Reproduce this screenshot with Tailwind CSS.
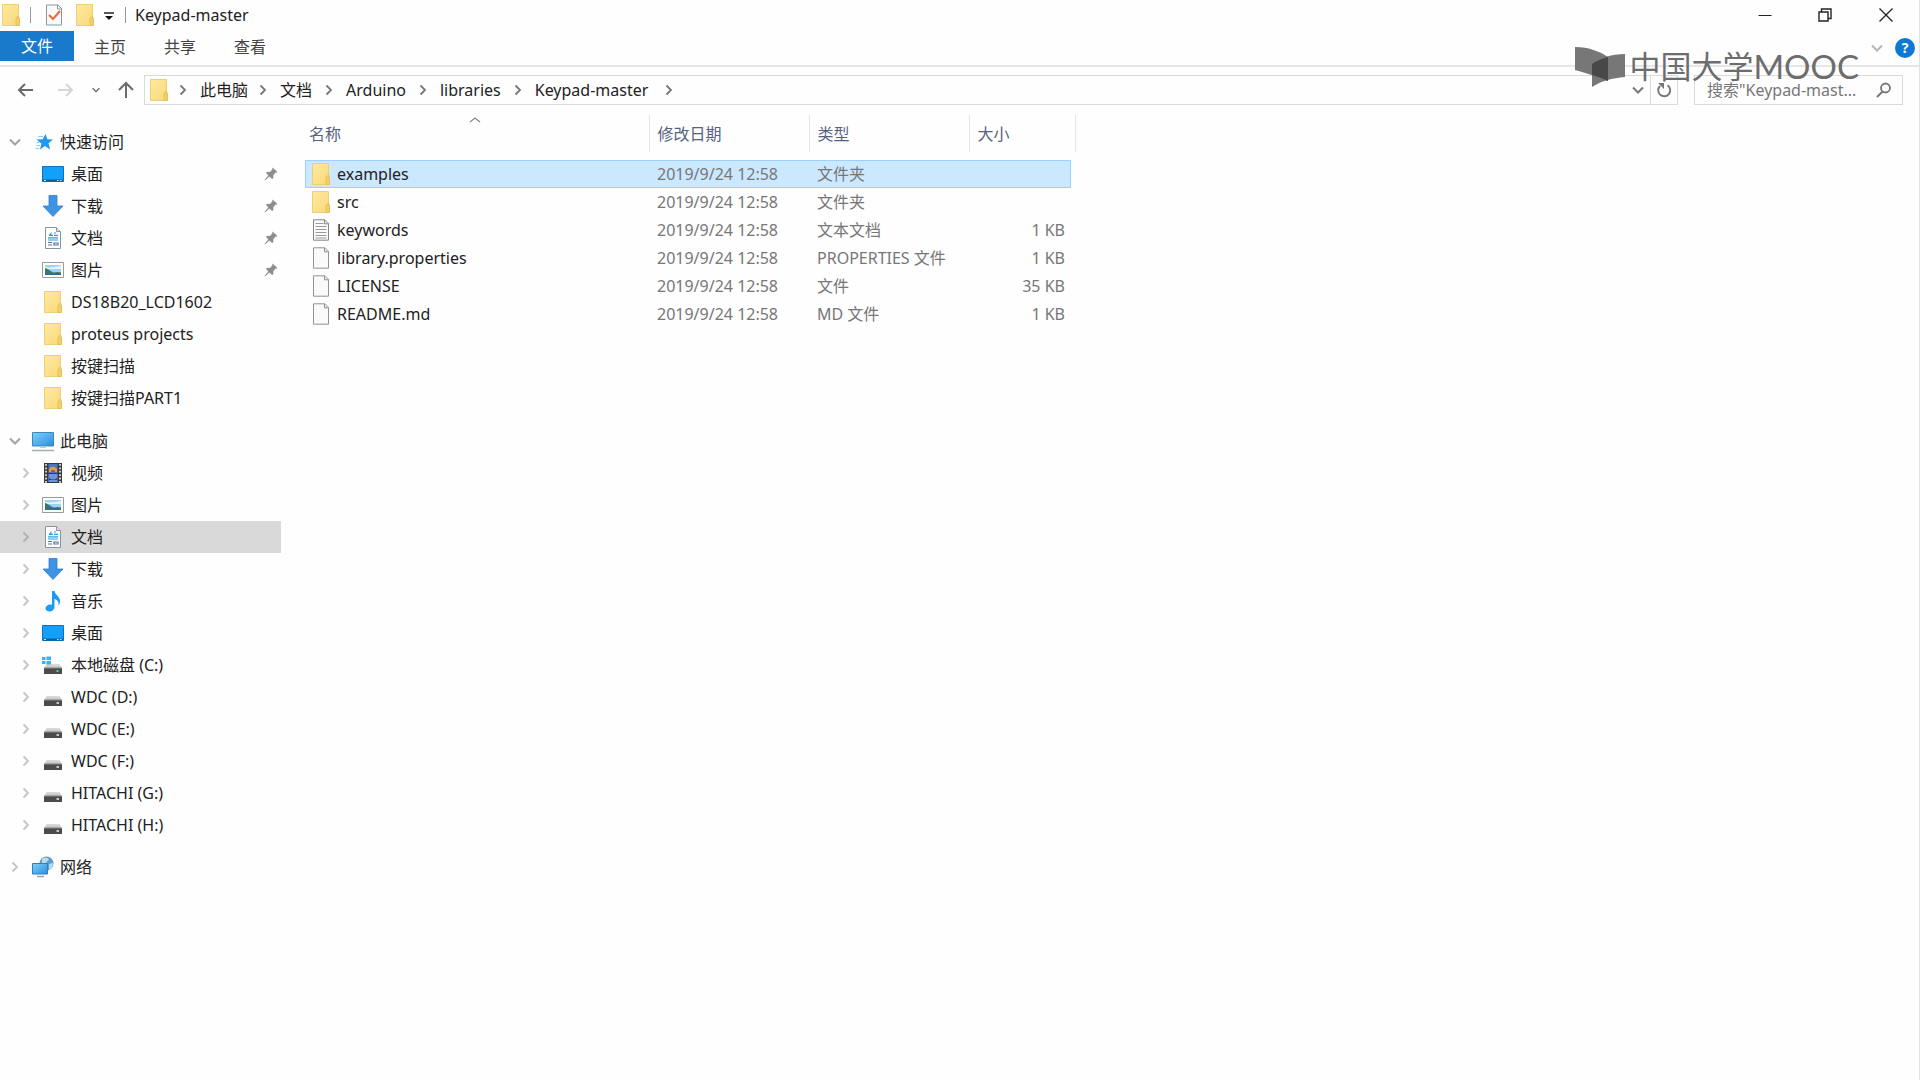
<!DOCTYPE html>
<html lang="zh-CN">
<head>
<meta charset="utf-8">
<title>Keypad-master</title>
<script src="https://cdn.jsdelivr.net/npm/@tailwindcss/browser@4"></script>
</head>
<body class="flex min-h-screen flex-col border-r border-[#e3e3e3] bg-[#fefefe] font-['Noto_Sans','Noto_Sans_CJK_SC',sans-serif] text-[16px] leading-6 text-[#222]">
<svg class="absolute h-0 w-0" aria-hidden="true">
  <defs>
    <linearGradient id="gBlue" x1="0" y1="0" x2="1" y2="1"><stop offset="0" stop-color="#7cd0fa"/><stop offset="1" stop-color="#2c8fdc"/></linearGradient>
    <linearGradient id="gFolder" x1="0" y1="0" x2="1" y2="1"><stop offset="0" stop-color="#ffe9a2"/><stop offset="1" stop-color="#f8d978"/></linearGradient>
    <linearGradient id="gDrive" x1="0" y1="0" x2="0" y2="1"><stop offset="0" stop-color="#dedede"/><stop offset="1" stop-color="#bdbdbd"/></linearGradient>
  </defs>
  <symbol id="folder" viewBox="0 0 20 22"><path d="M1.500 .5h16V13l1 1v7.500h-17z" fill="url(#gFolder)" stroke="#efcf74"/><path d="M15 21.500V14l2.500-2v2l1 1v6.500z" fill="#f3cf66" stroke="#e2b94f" stroke-width=".7"/></symbol>
  <symbol id="desktop" viewBox="0 0 22 22"><path d="M.5 3.500h21v15H.5z" fill="#12a0fb" stroke="#1271b8"/><path d="M1 17.500h20" stroke="#0b5f9f" stroke-width="2"/><path d="M2 17.500h2M15 17.500h1.500M18 17.500h1.500" stroke="#d8efff"/></symbol>
  <symbol id="download" viewBox="0 0 22 22"><path d="M7 .5h8V11h6L11 21.500 1 11h6z" fill="#3f93e4" stroke="#2f7fd0" stroke-width=".8"/></symbol>
  <symbol id="document" viewBox="0 0 22 22"><path d="M3.500 .5h11l4 4v17h-15z" fill="#fbfdff" stroke="#8b949b"/><path d="M14.500 .5v4h4" fill="#dde3e8" stroke="#8b949b"/><path d="M7 8l2.500-3v3z" fill="#2aa0e8"/><path d="M7 8.300h4M12 6h2M12 8.300h4M6 10.800h10M6 13h10" stroke="#2aa0e8" stroke-width="1.200" fill="none"/><path d="M6 15.500h4M6 18h4M12 16h4v2h-4z" stroke="#5a7896" stroke-width="1.200" fill="none"/></symbol>
  <symbol id="picture" viewBox="0 0 22 22"><path d="M.5 3.500h21v15H.5z" fill="#fff" stroke="#9a9a9a"/><path d="M3 6h16v10H3z" fill="#9fd2f7"/><path d="M3 8c5 1 10 0 16-1v3H3z" fill="#e6f4fd"/><path d="M3 9c4 1 6 4 9 4.500 3-1 5-.5 7 0V16H3z" fill="#3d7a60"/><path d="M3 14.500h16V16H3z" fill="#2e6aa0"/></symbol>
  <symbol id="video" viewBox="0 0 22 22"><path d="M2 1h18v20H2z" fill="#3a3a3a"/><path d="M6.500 2h9v9h-9z" fill="#4a76c8"/><path d="M7 7c3-3 5-3 8 0v3H7z" fill="#d9a63c"/><path d="M9 8h4v2H9z" fill="#c2407e"/><path d="M6.500 12h9v8h-9z" fill="#6a94e6"/><path d="M7 16c3 2 6 2 8 0v2H7z" fill="#27406e"/><path d="M4 2v19M18 2v19" stroke="#ddd" stroke-width="1.800" stroke-dasharray="1.800 1.600"/></symbol>
  <symbol id="music" viewBox="0 0 22 22"><path d="M10 1h2.500c.5 4 5.500 5 5.500 10 0 2-.7 3.500-1.500 4.500 .5-4-1.500-6-4-6.500v8c0 2.500-2.500 4.500-5 4.500S3.500 20 3.500 18.500c0-2.300 2.500-4 5-4 .6 0 1 .1 1.500.3z" fill="#1c9cf0"/></symbol>
  <symbol id="pc" viewBox="0 0 22 22"><path d="M.5 2.500h21v13.500H.5z" fill="url(#gBlue)" stroke="#3c87bd"/><path d="M8 16.500h6v1.500H8z" fill="#c4ccd2"/><path d="M0 20.500h22" stroke="#a3adb5" stroke-width="1.500"/></symbol>
  <symbol id="drive" viewBox="0 0 22 22"><path d="M4.500 10h13L20 14.500H2z" fill="url(#gDrive)"/><path d="M2 14h18v6H2z" fill="#4b4b4b"/><path d="M2 14h18" stroke="#8b8b8b"/><path d="M14.500 17h2.500" stroke="#e8f5e8" stroke-width="1.500"/></symbol>
  <symbol id="cdrive" viewBox="0 0 22 22"><path d="M4.500 10h13L20 14.500H2z" fill="url(#gDrive)"/><path d="M2 14h18v6H2z" fill="#4b4b4b"/><path d="M2 14h18" stroke="#8b8b8b"/><path d="M14.500 17h2" stroke="#4fe07c" stroke-width="2"/><path d="M0 3h3.500v3H0zM4.500 2.500H9V6H4.500zM0 7h3.500v3H0zM4.500 7H9v3.500H4.500z" fill="#25bdea"/></symbol>
  <symbol id="network" viewBox="0 0 22 22"><circle cx="14.500" cy="7.500" r="7" fill="#5d9fca"/><path d="M10 3c3-2 6-1 7 0l-3 4-4 1zM17 8l4-1c0 4-2 6-4 7z" fill="#b5dcf0"/><path d="M.5 7.500h15V18H.5z" fill="url(#gBlue)" stroke="#2f7fba"/><path d="M5 20.500h7" stroke="#8da3b3" stroke-width="1.500"/></symbol>
  <symbol id="star" viewBox="0 0 22 22"><path d="M12.500 3l1.800 5.200 5.700.3-4.500 3.800 1.600 6.200-5.100-3.500-5 3.500 1.400-6-5-4 6.300-.3z" fill="#2197ee"/><path d="M5 5.500h5M3.500 11.500h3M3 14.500h4M2.500 17.500h4" stroke="#8fcdf8"/></symbol>
  <symbol id="pin" viewBox="0 0 14 14"><path d="M8.500 .5l5 4.500-1.500.8-.5-.2-2.300 2.800.2 2.600-1.300 1L5.500 9.500 1 13.500.5 13 4.300 8.500 2 5.800l1.200-1.100 2.600.2L8.300 2.500z" fill="#8c8c8c"/></symbol>
  <symbol id="right" viewBox="0 0 10 12"><path d="M2.500 1.500L7 6l-4.500 4.500" fill="none" stroke="currentColor" stroke-width="1.800"/></symbol>
  <symbol id="down" viewBox="0 0 12 12"><path d="M1 3.500l5 5 5-5" fill="none" stroke="currentColor" stroke-width="2"/></symbol>
  <symbol id="file" viewBox="0 0 18 22"><path d="M1.500 .8h11.500l3.500 3.500v16.900h-15z" fill="#fafafa" stroke="#929292"/><path d="M12.500 .8v4h4" fill="#e6e6e6" stroke="#929292"/></symbol>
  <symbol id="text" viewBox="0 0 18 22"><path d="M1.500 .8h11.500l3.500 3.500v16.900h-15z" fill="#fafafa" stroke="#858585"/><path d="M12.500 .8v4h4" fill="#e6e6e6" stroke="#858585"/><path d="M3.500 4.500h8M3.500 7.500h11M3.500 10.500h11M3.500 13.500h11M3.500 16.500h11M3.500 19h11" stroke="#999" stroke-width="1.200"/></symbol>
</svg>

<header class="relative">
  <div class="flex h-[31px] items-center pb-[2px]">
    <svg class="ml-px h-[22px] w-5"><use href="#folder"/></svg>
    <span class="ml-[9px] h-4 w-px bg-[#999]"></span>
    <button aria-label="属性" class="ml-[14px]"><svg class="h-[22px] w-[18px]" viewBox="0 0 18 22"><path d="M1.500 1h11.500l3.500 3.500V21h-15z" fill="#f8fafc" stroke="#8f979e"/><path d="M12.500 1v4h4" fill="none" stroke="#8f979e"/><path d="M4 11l4 4 7-8" fill="none" stroke="#ee6b3b" stroke-width="2.200"/></svg></button>
    <button aria-label="新建文件夹" class="ml-3"><svg class="h-[22px] w-5"><use href="#folder"/></svg></button>
    <button aria-label="自定义快速访问工具栏" class="ml-2 pt-1"><svg class="h-3 w-3" viewBox="0 0 12 12"><path d="M1 2h10" stroke="#222" stroke-width="1.500"/><path d="M2 5h8L6 9z" fill="#111"/></svg></button>
    <span class="ml-[10px] h-4 w-px bg-[#999]"></span>
    <h1 class="ml-[9px]">Keypad-master</h1>
    <div class="ml-auto flex pr-[2px] text-[#222]">
      <button aria-label="最小化" class="flex w-[60px] justify-center"><svg class="h-4 w-4" viewBox="0 0 16 16"><path d="M1.500 8.500h13" stroke="currentColor"/></svg></button>
      <button aria-label="还原" class="flex w-[60px] justify-center"><svg class="h-4 w-4" viewBox="0 0 16 16"><path d="M2 5h9v9H2zM4.500 5V2H14v9.500h-3" fill="none" stroke="currentColor" stroke-width="1.400"/></svg></button>
      <button aria-label="关闭" class="flex w-[62px] justify-center"><svg class="h-4 w-4" viewBox="0 0 16 16"><path d="M1.500 1.500l13 13M14.500 1.500l-13 13" stroke="currentColor" stroke-width="1.300"/></svg></button>
    </div>
  </div>
  <nav class="flex h-9 items-start border-b-2 border-[#e6e6e6] text-[#444]">
    <button class="h-[30px] w-[74px] bg-[#1979ca] text-white">文件</button>
    <button class="ml-5 h-8 w-8">主页</button>
    <button class="ml-[38px] h-8 w-8">共享</button>
    <button class="ml-[38px] h-8 w-8">查看</button>
    <div class="ml-auto flex h-[34px] items-center gap-3 pr-1">
      <button aria-label="展开功能区" class="text-[#b5b5b5]"><svg class="h-3 w-3"><use href="#down"/></svg></button>
      <button aria-label="帮助" class="h-5 w-5 rounded-full bg-[#0f78d4] text-sm leading-5 font-bold text-white">?</button>
    </div>
  </nav>

  <div class="flex h-[46px] items-center pr-4 pb-px text-[#666]">
    <button aria-label="后退" class="ml-4"><svg class="h-5 w-5" viewBox="0 0 20 20"><path d="M17 10H3M9 4l-6 6 6 6" fill="none" stroke="#6b6b6b" stroke-width="2"/></svg></button>
    <button aria-label="前进" class="ml-5"><svg class="h-5 w-5" viewBox="0 0 20 20"><path d="M2 10h14M10 4l6 6-6 6" fill="none" stroke="#d6d6d6" stroke-width="2"/></svg></button>
    <button aria-label="最近浏览的位置" class="ml-4"><svg class="h-2 w-2"><use href="#down"/></svg></button>
    <button aria-label="向上" class="ml-4"><svg class="h-5 w-5" viewBox="0 0 20 20"><path d="M10 18V3M3 10l7-7 7 7" fill="none" stroke="#6b6b6b" stroke-width="2"/></svg></button>
    <nav aria-label="地址" class="ml-2 flex h-[30px] min-w-0 flex-1 items-center border border-[#dadada] text-[#222]">
      <svg class="ml-1 h-[22px] w-5"><use href="#folder"/></svg>
      <svg class="ml-[9px] h-3 w-[10px] text-[#777]"><use href="#right"/></svg>
      <a href="#" class="ml-3">此电脑</a>
      <svg class="ml-[10px] h-3 w-[10px] text-[#777]"><use href="#right"/></svg>
      <a href="#" class="ml-3">文档</a>
      <svg class="ml-3 h-3 w-[10px] text-[#777]"><use href="#right"/></svg>
      <a href="#" class="ml-3">Arduino</a>
      <svg class="ml-3 h-3 w-[10px] text-[#777]"><use href="#right"/></svg>
      <a href="#" class="ml-3">libraries</a>
      <svg class="ml-3 h-3 w-[10px] text-[#777]"><use href="#right"/></svg>
      <a href="#" class="ml-3">Keypad-master</a>
      <svg class="ml-4 h-3 w-[10px] text-[#777]"><use href="#right"/></svg>
      <button aria-label="以前的位置" class="ml-auto mr-[6px] text-[#777]"><svg class="h-3 w-3"><use href="#down"/></svg></button>
      <button aria-label="刷新" class="flex h-full w-[27px] items-center justify-center border-l border-[#dadada]"><svg class="h-4 w-4" viewBox="0 0 16 16"><path d="M11.500 3.200A6 6 0 1 1 4 4" fill="none" stroke="#777" stroke-width="1.900"/><path d="M2 1h6v6z" fill="#777"/></svg></button>
    </nav>
    <div class="ml-4 flex h-[30px] w-[209px] items-center border border-[#dadada] pl-3 pr-[10px]">
      <input type="text" aria-label="搜索" placeholder="搜索&quot;Keypad-mast..." class="min-w-0 flex-1 placeholder:text-[#777]">
      <svg class="h-4 w-4" viewBox="0 0 16 16"><circle cx="9.500" cy="6" r="4.500" fill="none" stroke="#777" stroke-width="1.800"/><path d="M6.500 9.500L1 15" stroke="#777" stroke-width="2"/></svg>
    </div>
  </div>

  <div class="absolute top-[45px] right-[60px] flex items-center text-[#6d6d6d]">
    <svg class="mr-1 h-[42px] w-[50px]" viewBox="0 0 50 42"><path d="M0 2c14 0 26 5 33 10v24C23 32 12 28 0 25z" fill="#777"/><path d="M17 19c8-6 20-10 33-10v23c-13 1-24 4-33 10z" fill="#777"/><path d="M17 19c4-3 9-5 16-7v24c-4-2-9-4-16-6z" fill="#484848"/></svg>
    <span class="text-[31px] leading-10">中国大学</span><span class="font-['Lato'] text-[33px] leading-10">MOOC</span>
  </div>
</header>

<main class="flex flex-1">
  <nav aria-label="导航窗格" class="w-[281px] shrink-0 pt-[13px]">
    <a href="#" class="flex h-8 items-center pl-[9px]"><svg class="h-3 w-3 text-[#a3a3a3]"><use href="#down"/></svg><svg class="ml-3 mr-[5px] h-[22px] w-[22px]"><use href="#star"/></svg>快速访问</a>
    <a href="#" class="flex h-8 items-center gap-[7px] pl-[42px]"><svg class="h-[22px] w-[22px]"><use href="#desktop"/></svg>桌面<svg class="ml-auto mr-[3px] h-[14px] w-[14px]"><use href="#pin"/></svg></a>
    <a href="#" class="flex h-8 items-center gap-[7px] pl-[42px]"><svg class="h-[22px] w-[22px]"><use href="#download"/></svg>下载<svg class="ml-auto mr-[3px] h-[14px] w-[14px]"><use href="#pin"/></svg></a>
    <a href="#" class="flex h-8 items-center gap-[7px] pl-[42px]"><svg class="h-[22px] w-[22px]"><use href="#document"/></svg>文档<svg class="ml-auto mr-[3px] h-[14px] w-[14px]"><use href="#pin"/></svg></a>
    <a href="#" class="flex h-8 items-center gap-[7px] pl-[42px]"><svg class="h-[22px] w-[22px]"><use href="#picture"/></svg>图片<svg class="ml-auto mr-[3px] h-[14px] w-[14px]"><use href="#pin"/></svg></a>
    <a href="#" class="flex h-8 items-center gap-[7px] pl-[42px]"><svg class="h-[22px] w-[22px]"><use href="#folder"/></svg>DS18B20_LCD1602</a>
    <a href="#" class="flex h-8 items-center gap-[7px] pl-[42px]"><svg class="h-[22px] w-[22px]"><use href="#folder"/></svg>proteus projects</a>
    <a href="#" class="flex h-8 items-center gap-[7px] pl-[42px]"><svg class="h-[22px] w-[22px]"><use href="#folder"/></svg>按键扫描</a>
    <a href="#" class="flex h-8 items-center gap-[7px] pl-[42px]"><svg class="h-[22px] w-[22px]"><use href="#folder"/></svg>按键扫描PART1</a>

    <a href="#" class="mt-[11px] flex h-8 items-center pl-[9px]"><svg class="h-3 w-3 text-[#a3a3a3]"><use href="#down"/></svg><svg class="ml-[11px] mr-[6px] h-[22px] w-[22px]"><use href="#pc"/></svg>此电脑</a>
    <a href="#" class="flex h-8 items-center gap-[7px] pl-[21px]"><svg class="mr-1 h-3 w-[10px] text-[#c4c4c4]"><use href="#right"/></svg><svg class="h-[22px] w-[22px]"><use href="#video"/></svg>视频</a>
    <a href="#" class="flex h-8 items-center gap-[7px] pl-[21px]"><svg class="mr-1 h-3 w-[10px] text-[#c4c4c4]"><use href="#right"/></svg><svg class="h-[22px] w-[22px]"><use href="#picture"/></svg>图片</a>
    <a href="#" aria-current="page" class="flex h-8 items-center gap-[7px] bg-[#d9d9d9] pl-[21px]"><svg class="mr-1 h-3 w-[10px] text-[#b0b0b0]"><use href="#right"/></svg><svg class="h-[22px] w-[22px]"><use href="#document"/></svg>文档</a>
    <a href="#" class="flex h-8 items-center gap-[7px] pl-[21px]"><svg class="mr-1 h-3 w-[10px] text-[#c4c4c4]"><use href="#right"/></svg><svg class="h-[22px] w-[22px]"><use href="#download"/></svg>下载</a>
    <a href="#" class="flex h-8 items-center gap-[7px] pl-[21px]"><svg class="mr-1 h-3 w-[10px] text-[#c4c4c4]"><use href="#right"/></svg><svg class="h-[22px] w-[22px]"><use href="#music"/></svg>音乐</a>
    <a href="#" class="flex h-8 items-center gap-[7px] pl-[21px]"><svg class="mr-1 h-3 w-[10px] text-[#c4c4c4]"><use href="#right"/></svg><svg class="h-[22px] w-[22px]"><use href="#desktop"/></svg>桌面</a>
    <a href="#" class="flex h-8 items-center gap-[7px] pl-[21px]"><svg class="mr-1 h-3 w-[10px] text-[#c4c4c4]"><use href="#right"/></svg><svg class="h-[22px] w-[22px]"><use href="#cdrive"/></svg>本地磁盘 (C:)</a>
    <a href="#" class="flex h-8 items-center gap-[7px] pl-[21px]"><svg class="mr-1 h-3 w-[10px] text-[#c4c4c4]"><use href="#right"/></svg><svg class="h-[22px] w-[22px]"><use href="#drive"/></svg>WDC (D:)</a>
    <a href="#" class="flex h-8 items-center gap-[7px] pl-[21px]"><svg class="mr-1 h-3 w-[10px] text-[#c4c4c4]"><use href="#right"/></svg><svg class="h-[22px] w-[22px]"><use href="#drive"/></svg>WDC (E:)</a>
    <a href="#" class="flex h-8 items-center gap-[7px] pl-[21px]"><svg class="mr-1 h-3 w-[10px] text-[#c4c4c4]"><use href="#right"/></svg><svg class="h-[22px] w-[22px]"><use href="#drive"/></svg>WDC (F:)</a>
    <a href="#" class="flex h-8 items-center gap-[7px] pl-[21px]"><svg class="mr-1 h-3 w-[10px] text-[#c4c4c4]"><use href="#right"/></svg><svg class="h-[22px] w-[22px]"><use href="#drive"/></svg>HITACHI (G:)</a>
    <a href="#" class="flex h-8 items-center gap-[7px] pl-[21px]"><svg class="mr-1 h-3 w-[10px] text-[#c4c4c4]"><use href="#right"/></svg><svg class="h-[22px] w-[22px]"><use href="#drive"/></svg>HITACHI (H:)</a>

    <a href="#" class="mt-[10px] flex h-8 items-center pl-[10px]"><svg class="h-3 w-[10px] text-[#c4c4c4]"><use href="#right"/></svg><svg class="ml-3 mr-[6px] h-[22px] w-[22px]"><use href="#network"/></svg>网络</a>
  </nav>

  <section class="min-w-0 flex-1 pl-6 pt-[2px]">
    <table class="w-[770px] table-fixed border-collapse text-left text-[#777]">
      <colgroup><col class="w-[344px]"><col class="w-40"><col class="w-40"><col class="w-[106px]"></colgroup>
      <thead class="text-[#56637f]">
        <tr class="h-[37px]">
          <th class="relative border-r border-[#e5e5e5] pl-1 font-normal">名称<svg class="absolute left-[164px] top-0 h-3 w-3" viewBox="0 0 12 12"><path d="M1 7l5-4 5 4" fill="none" stroke="#888" stroke-width="1.300"/></svg></th>
          <th class="border-r border-[#e5e5e5] pl-2 font-normal">修改日期</th>
          <th class="border-r border-[#e5e5e5] pl-2 font-normal">类型</th>
          <th class="border-r border-[#e5e5e5] pl-2 font-normal">大小</th>
        </tr>
      </thead>
    </table>
    <table class="mt-2 w-[766px] table-fixed border-collapse text-[#777]">
      <colgroup><col class="w-[344px]"><col class="w-40"><col class="w-40"><col class="w-[102px]"></colgroup>
      <tbody>
        <tr class="h-7 bg-[#cce8ff] outline -outline-offset-1 outline-[#99d1ff]"><td class="pl-[6px] text-[#222]"><span class="flex items-center gap-[6px]"><svg class="h-[22px] w-5"><use href="#folder"/></svg>examples</span></td><td class="pl-2">2019/9/24 12:58</td><td class="pl-2">文件夹</td><td></td></tr>
        <tr class="h-7"><td class="pl-[6px] text-[#222]"><span class="flex items-center gap-[6px]"><svg class="h-[22px] w-5"><use href="#folder"/></svg>src</span></td><td class="pl-2">2019/9/24 12:58</td><td class="pl-2">文件夹</td><td></td></tr>
        <tr class="h-7"><td class="pl-[6px] text-[#222]"><span class="flex items-center gap-[6px]"><svg class="h-[22px] w-5"><use href="#text"/></svg>keywords</span></td><td class="pl-2">2019/9/24 12:58</td><td class="pl-2">文本文档</td><td class="pr-[6px] text-right">1 KB</td></tr>
        <tr class="h-7"><td class="pl-[6px] text-[#222]"><span class="flex items-center gap-[6px]"><svg class="h-[22px] w-5"><use href="#file"/></svg>library.properties</span></td><td class="pl-2">2019/9/24 12:58</td><td class="pl-2">PROPERTIES 文件</td><td class="pr-[6px] text-right">1 KB</td></tr>
        <tr class="h-7"><td class="pl-[6px] text-[#222]"><span class="flex items-center gap-[6px]"><svg class="h-[22px] w-5"><use href="#file"/></svg>LICENSE</span></td><td class="pl-2">2019/9/24 12:58</td><td class="pl-2">文件</td><td class="pr-[6px] text-right">35 KB</td></tr>
        <tr class="h-7"><td class="pl-[6px] text-[#222]"><span class="flex items-center gap-[6px]"><svg class="h-[22px] w-5"><use href="#file"/></svg>README.md</span></td><td class="pl-2">2019/9/24 12:58</td><td class="pl-2">MD 文件</td><td class="pr-[6px] text-right">1 KB</td></tr>
      </tbody>
    </table>
  </section>
</main>
</body>
</html>
